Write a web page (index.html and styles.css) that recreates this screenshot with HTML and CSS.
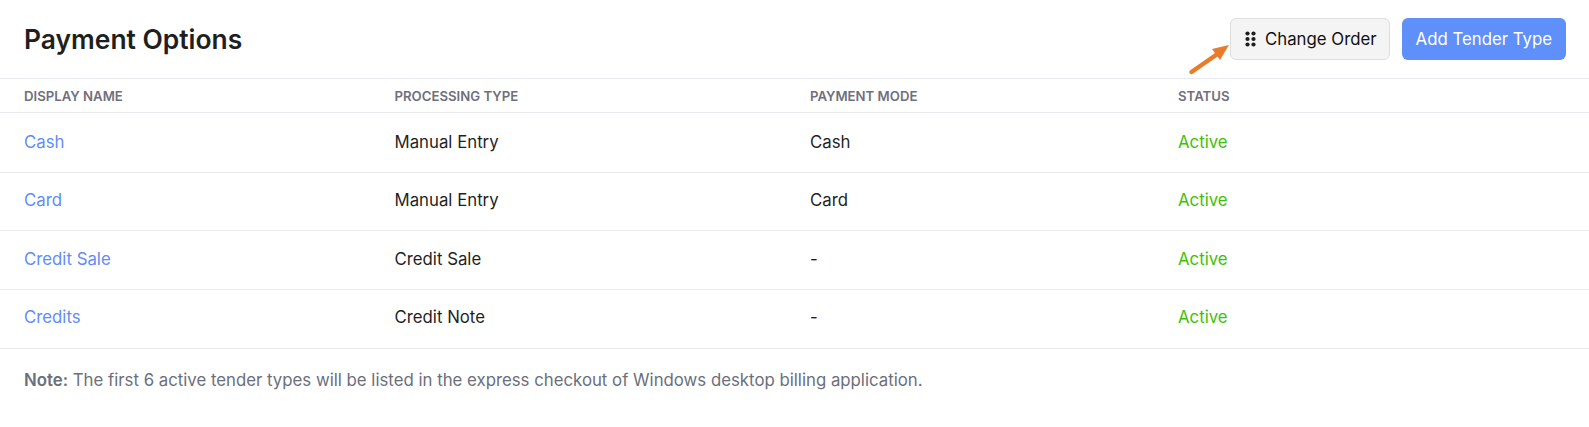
FILE: index.html
```html
<!DOCTYPE html>
<html lang="en">
<head>
    <meta charset="UTF-8">
    <meta name="viewport" content="width=device-width, initial-scale=1.0">
    <title>Payment Options</title>
    <link rel="stylesheet" href="styles.css">
</head>
<body>

<div class="page-header">
    <h1>Payment Options</h1>
    <div class="actions">
        <button class="btn btn-order">
            <svg class="grip" width="11" height="16" viewBox="0 0 11 16" fill="#1f1f1f">
                <circle cx="2.5" cy="2.5" r="2.1"/><circle cx="8.5" cy="2.5" r="2.1"/>
                <circle cx="2.5" cy="8" r="2.1"/><circle cx="8.5" cy="8" r="2.1"/>
                <circle cx="2.5" cy="13.5" r="2.1"/><circle cx="8.5" cy="13.5" r="2.1"/>
            </svg>
            Change Order
        </button>
        <button class="btn btn-primary">Add Tender Type</button>
        <svg class="arrow" width="46" height="34" viewBox="0 0 46 34">
            <path d="M3.5 30 L28 13" stroke="#e87b2c" stroke-width="4.5" stroke-linecap="round" fill="none"/>
            <path d="M41 3 L24 7 L32 18 Z" fill="#e87b2c"/>
        </svg>
    </div>
</div>

<table class="tender-table">
    <thead>
        <tr>
            <th class="col-name">Display Name</th>
            <th class="col-type">Processing Type</th>
            <th class="col-mode">Payment Mode</th>
            <th>Status</th>
        </tr>
    </thead>
    <tbody>
        <tr>
            <td><a href="#">Cash</a></td>
            <td>Manual Entry</td>
            <td>Cash</td>
            <td class="active">Active</td>
        </tr>
        <tr>
            <td><a href="#">Card</a></td>
            <td>Manual Entry</td>
            <td>Card</td>
            <td class="active">Active</td>
        </tr>
        <tr>
            <td><a href="#">Credit Sale</a></td>
            <td>Credit Sale</td>
            <td>-</td>
            <td class="active">Active</td>
        </tr>
        <tr>
            <td><a href="#">Credits</a></td>
            <td>Credit Note</td>
            <td>-</td>
            <td class="active">Active</td>
        </tr>
    </tbody>
</table>

<p class="note"><strong>Note:</strong> The first 6 active tender types will be listed in the express checkout of Windows desktop billing application.</p>

</body>
</html>
```

FILE: styles.css
```css
body {
    margin: 0;
    font-family: Inter, "Liberation Sans", sans-serif;
    font-size: 16.8px;
    color: #1f1f1f;
    background-color: #fff;
}
.page-header {
    display: flex;
    justify-content: space-between;
    align-items: center;
    height: 78px;
    padding: 0 23px 0 24px;
    border-bottom: 1px solid #e8e8ef;
}
h1 {
    margin: 0;
    font-size: 26.4px;
    font-weight: 600;
}
.actions {
    position: relative;
    display: flex;
    gap: 12px;
}
.btn {
    height: 42px;
    padding: 0 14px;
    font-family: inherit;
    font-size: 16.8px;
    border-radius: 6px;
    cursor: pointer;
}
.btn-order {
    display: flex;
    align-items: center;
    gap: 9px;
    padding-right: 12px;
    color: #111;
    background-color: #f4f4f4;
    border: 1px solid #dedede;
}
.btn-primary {
    color: #fff;
    background-color: #5f90fa;
    border: none;
}
.arrow {
    position: absolute;
    left: -42px;
    top: 24px;
}
.tender-table {
    width: 100%;
    border-collapse: collapse;
    table-layout: fixed;
}
.tender-table th {
    height: 33px;
    padding: 0 0 0 24px;
    font-size: 13.2px;
    font-weight: 600;
    text-align: left;
    text-transform: uppercase;
    color: #6f6f7d;
    border-bottom: 1px solid #e8e8ef;
}
.col-name {
    width: 346.5px;
}
.col-type {
    width: 391.5px;
}
.col-mode {
    width: 344px;
}
.tender-table td {
    height: 56px;
    padding: 0 0 2px 24px;
    border-bottom: 1px solid #e8e8ef;
}
.tender-table tbody tr:first-child td {
    height: 57px;
}
.tender-table tbody tr:nth-child(2) td {
    height: 53px;
    padding-bottom: 4px;
}
.tender-table tbody tr:nth-child(4) td {
    height: 54px;
    padding-bottom: 4px;
}
.tender-table a {
    color: #5f8cf8;
    text-decoration: none;
}
.active {
    color: #43bf06;
}
.note {
    margin: 21px 24px 0;
    color: #6b6f7c;
}
.note strong {
    font-weight: 600;
}
```
